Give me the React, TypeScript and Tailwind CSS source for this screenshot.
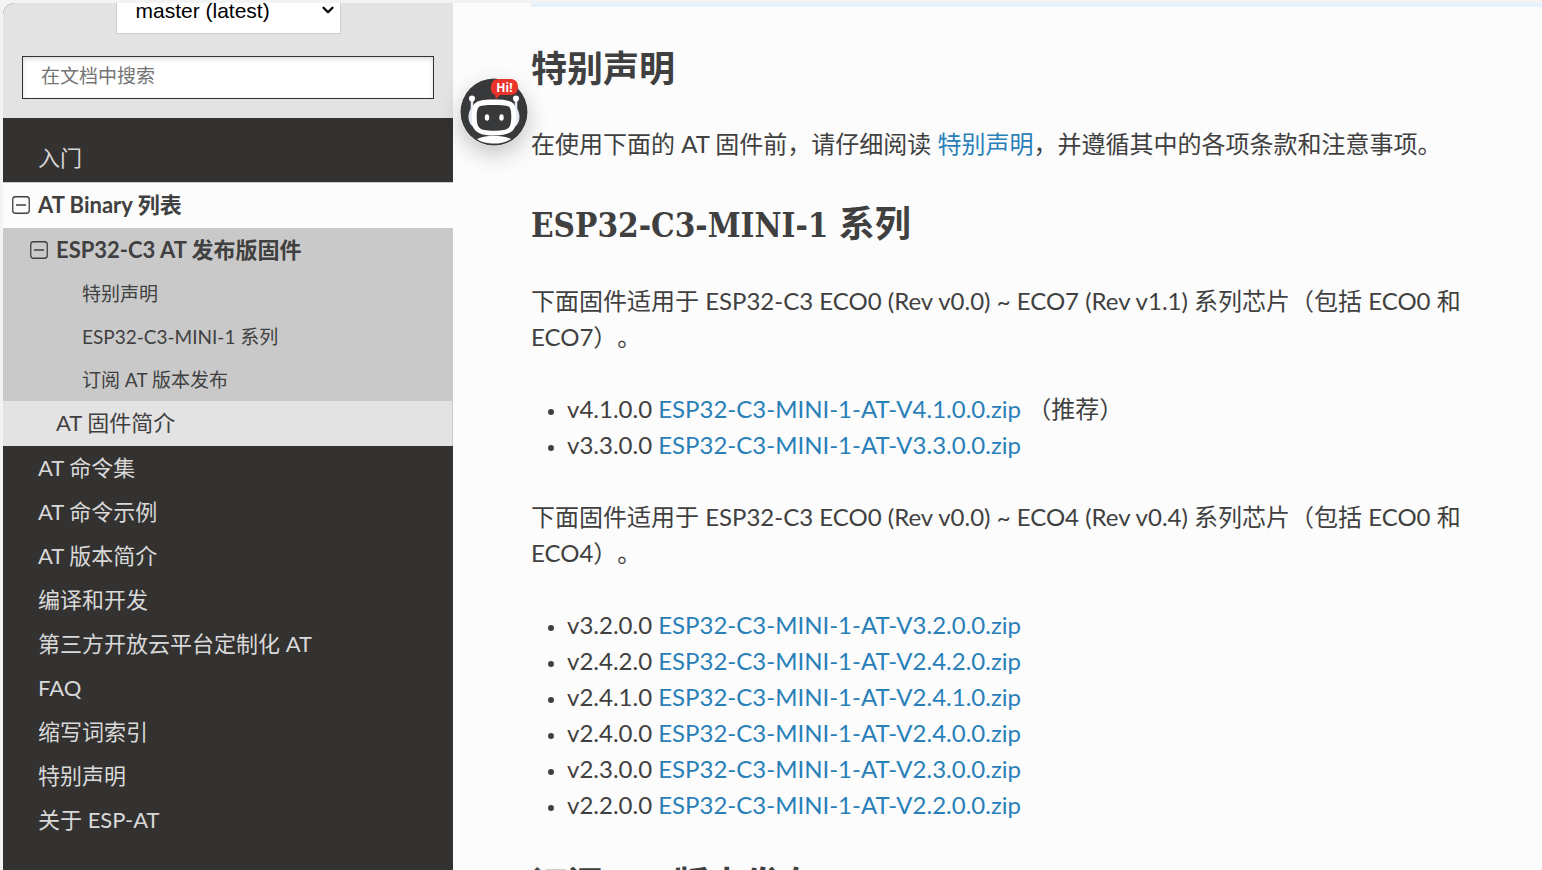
import { ChevronDown } from "lucide-react";

const TOP_LINKS = [
  "AT 命令集",
  "AT 命令示例",
  "AT 版本简介",
  "编译和开发",
  "第三方开放云平台定制化 AT",
  "FAQ",
  "缩写词索引",
  "特别声明",
  "关于 ESP-AT",
];

const SECTION_LINKS = ["特别声明", "ESP32-C3-MINI-1 系列", "订阅 AT 版本发布"];

type Release = { version: string; file: string; note?: string };

const ECO7_RELEASES: Release[] = [
  {
    version: "v4.1.0.0",
    file: "ESP32-C3-MINI-1-AT-V4.1.0.0.zip",
    note: "（推荐）",
  },
  { version: "v3.3.0.0", file: "ESP32-C3-MINI-1-AT-V3.3.0.0.zip" },
];

const ECO4_RELEASES: Release[] = [
  { version: "v3.2.0.0", file: "ESP32-C3-MINI-1-AT-V3.2.0.0.zip" },
  { version: "v2.4.2.0", file: "ESP32-C3-MINI-1-AT-V2.4.2.0.zip" },
  { version: "v2.4.1.0", file: "ESP32-C3-MINI-1-AT-V2.4.1.0.zip" },
  { version: "v2.4.0.0", file: "ESP32-C3-MINI-1-AT-V2.4.0.0.zip" },
  { version: "v2.3.0.0", file: "ESP32-C3-MINI-1-AT-V2.3.0.0.zip" },
  { version: "v2.2.0.0", file: "ESP32-C3-MINI-1-AT-V2.2.0.0.zip" },
];

function CollapseButton() {
  return (
    <button type="button" aria-label="折叠" className="mr-2 shrink-0">
      <svg width="18" height="18" viewBox="0 0 18 18" fill="none">
        <rect
          x="0.75"
          y="0.75"
          width="16.5"
          height="16.5"
          rx="2.75"
          stroke="#404040"
          strokeWidth="1.3"
        />
        <path d="M4 9h10" stroke="#404040" strokeWidth="1.3" />
      </svg>
    </button>
  );
}

function Sidebar() {
  return (
    <nav className="w-[450px] shrink-0 bg-[#343230] text-[22px] leading-[44px] text-[#d9d9d9]">
      <div className="bg-[#e3e3e3] px-[19px] pb-[19px]">
        <div className="relative mx-auto -mt-[15px] w-[225px]">
          <select
            aria-label="版本"
            className="h-[46px] w-full appearance-none border border-[#ccc] bg-white px-[19px] font-['Liberation_Sans',sans-serif] text-[21px] leading-[44px] text-black"
          >
            <option>master (latest)</option>
          </select>
          <ChevronDown
            className="pointer-events-none absolute top-[13px] right-1 text-black"
            size={18}
            strokeWidth={3}
          />
        </div>
        <input
          type="text"
          aria-label="在文档中搜索"
          placeholder="在文档中搜索"
          className="mt-[22px] block h-[43px] w-full border border-[#343131] bg-white px-[18px] pb-1 text-[19px] shadow-[inset_0_2px_5px_#ddd] placeholder:text-[#757575]"
        />
      </div>

      <ul className="pt-[18px]">
        <li className="pb-0.5">
          <a href="#start" className="block pl-[35px]">
            入门
          </a>
        </li>
        <li className="text-[#404040]">
          <div className="border-t border-[#c9c9c9] bg-[#fcfcfc] pb-px pl-[9px] font-bold">
            <div className="flex items-center">
              <CollapseButton />
              <a href="#binary">AT Binary 列表</a>
            </div>
          </div>
          <ul>
            <li className="bg-[#c9c9c9]">
              <div className="flex items-center pl-[27px] font-bold">
                <CollapseButton />
                <a href="#esp32c3">ESP32-C3 AT 发布版固件</a>
              </div>
              <ul className="text-[19px] leading-[43px]">
                {SECTION_LINKS.map((label) => (
                  <li key={label}>
                    <a href="#section" className="block pl-[79px]">
                      {label}
                    </a>
                  </li>
                ))}
              </ul>
            </li>
            <li className="border-r border-[#c9c9c9] bg-[#e3e3e3]">
              <a href="#intro" className="block pb-px pl-[53px]">
                AT 固件简介
              </a>
            </li>
          </ul>
        </li>
        {TOP_LINKS.map((label) => (
          <li key={label}>
            <a href="#page" className="block pl-[35px]">
              {label}
            </a>
          </li>
        ))}
      </ul>
    </nav>
  );
}

function ReleaseList({ releases }: { releases: Release[] }) {
  return (
    <ul className="my-9 list-disc pl-9">
      {releases.map((r) => (
        <li key={r.version} className="marker:text-[18px]">
          {r.version}{" "}
          <a href="#download" className="text-[#2980b9]">
            {r.file}
          </a>
          {r.note && <> {r.note}</>}
        </li>
      ))}
    </ul>
  );
}

function ChatBot() {
  return (
    <button
      type="button"
      aria-label="Hi!"
      className="absolute top-[75px] left-[457px] size-[68px] rounded-full shadow-[0_8px_22px_rgba(0,0,0,0.22)]"
    >
      <svg viewBox="0 0 68 68" className="size-full">
        <circle cx="34" cy="34" r="33.5" fill="#38393b" />
        {/* antennas */}
        <path
          d="M12 21v14M56 21v14"
          stroke="#e4e8f2"
          strokeWidth="2.6"
          strokeLinecap="round"
        />
        <circle cx="12" cy="20.5" r="3" fill="#fff" />
        <circle cx="56" cy="20.5" r="3" fill="#fff" />
        {/* ears */}
        <path
          d="M14 28c-4 2-5.500 7-5.500 11s2 9 6.500 11zM54 28c4 2 5.500 7 5.500 11s-2 9-6.500 11z"
          fill="#e4e8f2"
        />
        {/* shoulders */}
        <path
          d="M17 61c5-2.500 11-3 17-3s12.500.5 17 3c-5 3.500-11 4.500-17 4.500s-12.500-1-17-4.500z"
          fill="#fff"
        />
        {/* head and face */}
        <path
          d="M34 21.500c11 0 19 1 21 6.500 1.700 5 1.700 16 0 21-2.500 6-9 8.500-21 8.500s-18.500-2.500-21-8.500c-1.700-5-1.700-16 0-21 2-5.500 10-6.500 21-6.500z"
          fill="#fff"
        />
        <path
          d="M34 27c8 0 13.500.3 15.500 2.200 2.400 2.500 2.400 16 0 19.500-2.200 3.300-7.500 4-15.500 4s-13.300-.7-15.500-4c-2.400-3.500-2.400-17 0-19.500 2-1.900 7.500-2.200 15.500-2.200z"
          fill="#38393b"
        />
        <ellipse cx="27" cy="39.500" rx="2.200" ry="3.300" fill="#fff" />
        <ellipse cx="41.500" cy="39.500" rx="2.200" ry="3.300" fill="#fff" />
        {/* speech bubble */}
        <path
          d="M38 1h13a7 7 0 0 1 7 7v2a7 7 0 0 1-7 7H40l-4 4-1-4a7 7 0 0 1-4-7V8a7 7 0 0 1 7-7z"
          fill="#e8342a"
        />
        <text
          x="44.500"
          y="14"
          textAnchor="middle"
          fontFamily="Open Sans, sans-serif"
          fontWeight="700"
          fontSize="12"
          fill="#fff"
        >
          Hi!
        </text>
      </svg>
    </button>
  );
}

const heading =
  "mt-[38px] mb-[33px] font-['DejaVu_Serif_Condensed','DejaVu_Serif','Noto_Sans_CJK_SC',serif] text-[36px] leading-[48px] font-bold";

export default function App() {
  return (
    <div
      lang="zh-CN"
      className="h-screen overflow-hidden bg-[#f3f3f3] pt-[3px] pl-[3px] font-['Lato','Noto_Sans_CJK_SC',sans-serif] text-[#404040] [text-spacing-trim:space-all]"
    >
      <div className="relative flex h-full overflow-hidden rounded-tl-xl bg-[#fcfcfc]">
        <Sidebar />
        <main className="min-w-0 flex-1 pl-[78px] text-[24px] leading-[36px]">
          <div className="h-1 bg-[#e7f2fa]" />
          <div className="pr-[30px]">
            <h2 className={heading}>特别声明</h2>
            <p>
              在使用下面的 AT 固件前，请仔细阅读{" "}
              <a href="#notice" className="text-[#2980b9]">
                特别声明
              </a>
              ，并遵循其中的各项条款和注意事项。
            </p>
            <h2 className={heading}>
              <span className="text-[33px]">ESP32-C3-MINI-1 </span>系列
            </h2>
            <p>
              下面固件适用于 ESP32-C3 ECO0 (Rev v0.0) ~ ECO7 (Rev v1.1)
              系列芯片（包括 ECO0 和 ECO7）。
            </p>
            <ReleaseList releases={ECO7_RELEASES} />
            <p>
              下面固件适用于 ESP32-C3 ECO0 (Rev v0.0) ~ ECO4 (Rev v0.4)
              系列芯片（包括 ECO0 和 ECO4）。
            </p>
            <ReleaseList releases={ECO4_RELEASES} />
            <h2 className={heading}>订阅 AT 版本发布</h2>
          </div>
        </main>
        <ChatBot />
      </div>
    </div>
  );
}
